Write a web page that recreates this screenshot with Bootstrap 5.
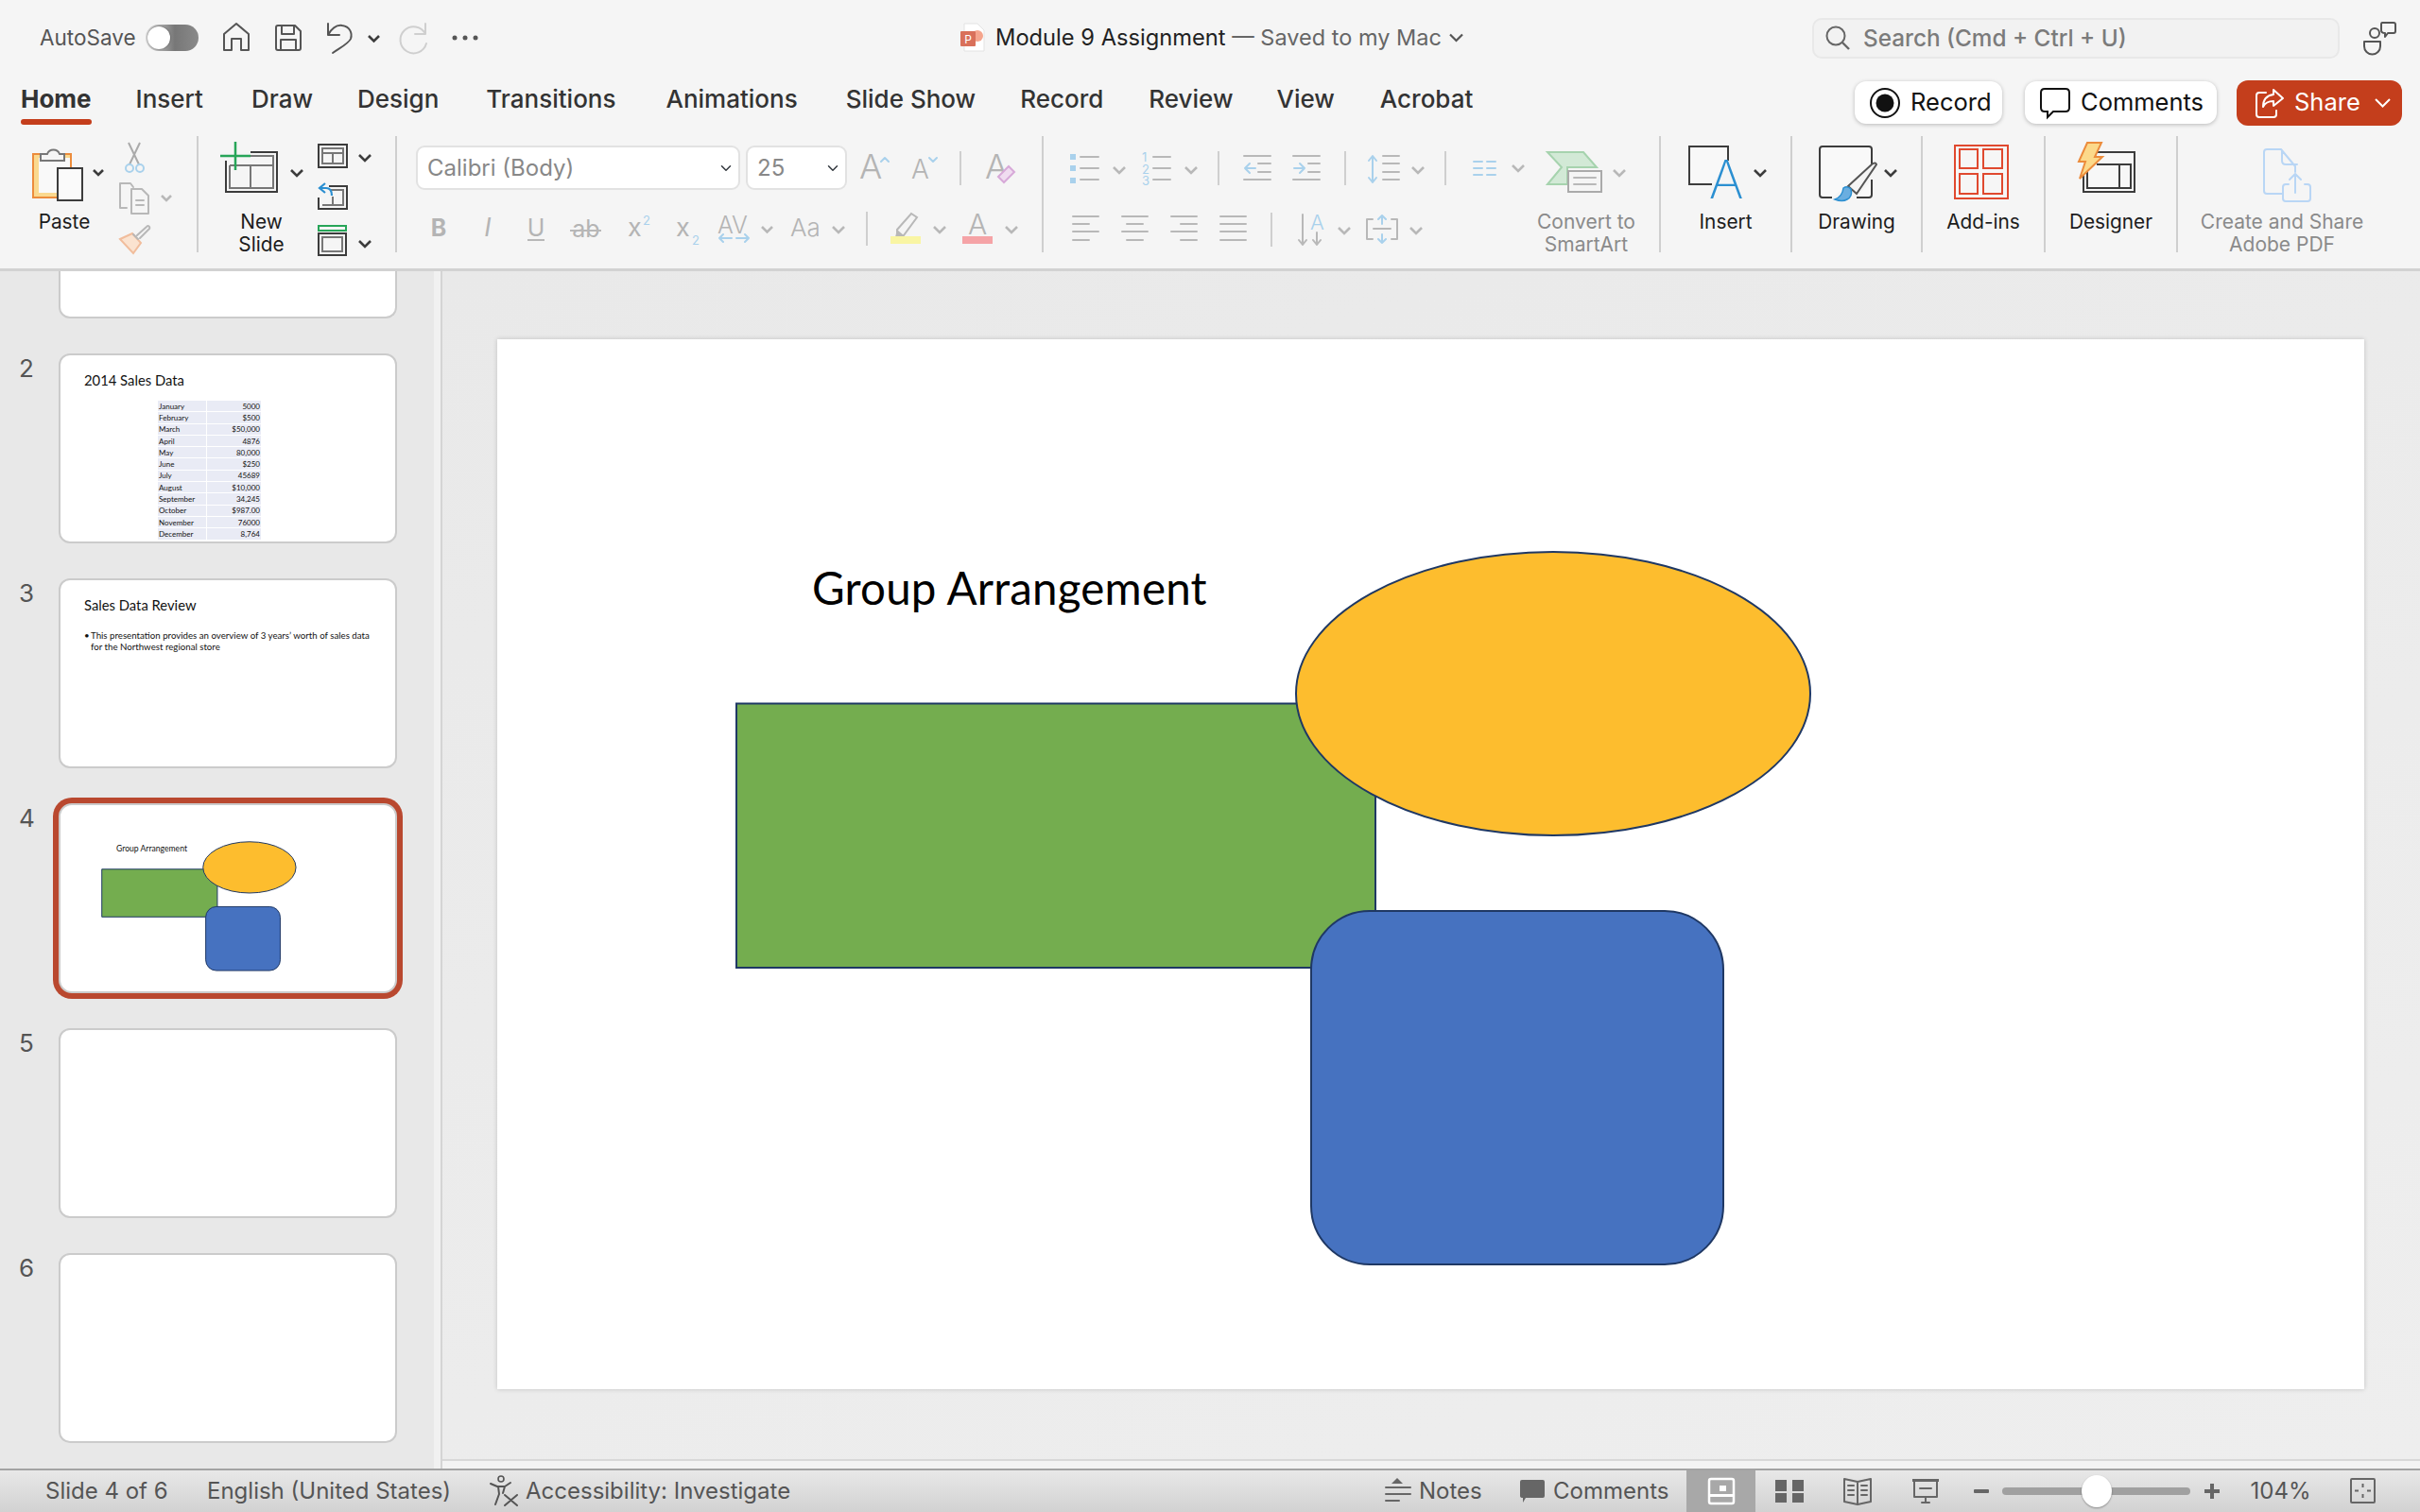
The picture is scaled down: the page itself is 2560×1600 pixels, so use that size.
<!DOCTYPE html>
<html lang="en"><head><meta charset="utf-8"><title>Module 9 Assignment</title>
<link href="https://cdn.jsdelivr.net/npm/bootstrap@5.3.0/dist/css/bootstrap.min.css" rel="stylesheet">
<style>
html,body{height:100%;margin:0}
body{width:2560px;height:1600px;overflow:hidden;background:#f5f5f5;font-family:Inter,"Liberation Sans",sans-serif;color:#222}
svg{display:block;flex:none;overflow:visible}
.ln{fill:none;stroke-width:2;stroke-linecap:round;stroke-linejoin:round}
.k{stroke:#3c3c3c}.g{stroke:#b8b8b8}.m{stroke:#666}.b{stroke:#a9d1ec}.n{stroke:#555}
.ch{fill:none;stroke:#3c3c3c;stroke-width:2.6}.cg{fill:none;stroke:#b8b8b8;stroke-width:2.6}
.t-g{fill:#b4b4b4;font-family:Inter,sans-serif}.t-b{fill:#a9d1ec;font-family:Inter,sans-serif}
.topbar{height:80px}
.tb-left{width:1016px;padding-left:42px}
.as-label{width:112px;font-size:22.5px;color:#555}
.toggle{width:56px;height:28px;border-radius:14px;background:linear-gradient(90deg,#ddd,#777 55%,#8a8a8a);padding:2px}
.knob{width:24px;height:24px;border-radius:50%;background:#fff;box-shadow:0 0 2px rgba(0,0,0,.5)}
.tb-title{width:901px;font-size:23.7px}
.tb-title .saved{color:#666;font-size:23.5px}
.search{width:558px;height:43px;background:#f2f2f2;border:2px solid #e8e8e8;border-radius:10px;color:#7b7b7b;font-size:24.3px;font-weight:500;padding-left:12px;gap:14px}
.tabsrow{height:64px;padding-left:22px;padding-right:19px}
.tab-act{padding-bottom:7px}
.nav-tabs-ppt .nav-link{padding:0 0 14px;color:#333;font-size:26px;font-weight:500;margin-right:50px;position:relative;line-height:50px}
.nav-tabs-ppt .nav-link.active{font-weight:700;color:#333;margin-right:47px}
.nav-tabs-ppt .nav-link.active::after{content:"";position:absolute;left:0;right:0;top:46px;height:6px;border-radius:3px;background:#c43e1c}
.nav-tabs-ppt .nav-item:nth-child(2) .nav-link{margin-right:51px}
.nav-tabs-ppt .nav-item:nth-child(3) .nav-link{margin-right:47px}
.nav-tabs-ppt .nav-item:nth-child(5) .nav-link{margin-right:53px}
.nav-tabs-ppt .nav-item:nth-child(6) .nav-link{margin-right:51px}
.nav-tabs-ppt .nav-item:nth-child(7) .nav-link{margin-right:47px}
.nav-tabs-ppt .nav-item:nth-child(8) .nav-link{margin-right:48px}
.nav-tabs-ppt .nav-item:nth-child(9) .nav-link{margin-right:46px}
.nav-tabs-ppt .nav-item:nth-child(10) .nav-link{margin-right:48px}
.btn-ppt{height:45px;background:#fff;border:0;border-radius:12px;box-shadow:0 1px 4px rgba(0,0,0,.25);font-size:25.5px;color:#111;padding:0;display:flex;align-items:center}
.btn-rec{width:156px;margin-right:24px;padding-left:16px;gap:11px}
.btn-com{width:203px;margin-right:21px;padding-left:16px;gap:11px}
.btn-share{width:175px;height:48px;background:#c43e1c;color:#fff;padding-left:20px;gap:11px;box-shadow:none}
.btn-share:hover{background:#c43e1c;color:#fff}
.ribbon{height:143px;border-bottom:3px solid #d2d2d2}
.rg{height:123px;border-right:2px solid #cfcfcf;flex:none}
.g1{width:210px;padding-left:34px}.g2{width:210px}.g3{width:684px}.g4{width:653px}.g5{width:139px}.g6{width:138px}.g7{width:130px}.g8{width:140px}
.g9{width:220px}
.lab{font-size:20.8px;line-height:24px;color:#1c1c1c;text-align:center;margin-top:-1px}
.dim{color:#8a8a8a;font-size:21px}
.lab-paste{width:80px;padding-right:12px}
.lab-new{padding-left:13px;width:120px}
.lab-smart{padding-right:17px;width:137px}
.col-stack{width:72px}.col-stack2{width:70px}
.row1{height:67px}.row2{height:64px}
.pad-font{padding-left:20px}
.pad-fontb{padding-left:18px;margin-top:-1px}
.font-sel{width:343px;height:47px;font-size:24px;color:#888;border:2px solid #e2e2e2;border-radius:9px;padding:0 0 0 10px;background-size:16px 12px;background-position:right 5px center;flex:none}
.size-sel{width:107px;margin-left:6px}
.vsep{width:2px;height:36px;background:#cfcfcf;flex:none}
.mx-a{margin:0 11px}.mx-b{margin:0 14px}.mx-c{margin:0 12px}
.col-para{width:514px}
.app-main{height:1267px}
.side{width:459px;background:#e8e8e8;overflow:hidden;flex:none}
.side-strip{width:9px;background:#f1f1f1;border-right:2px solid #d4d4d4;flex:none}
.sl-row{margin-bottom:37px}
.sl-num{width:62px;padding-left:20px;font-size:26px;line-height:32px;color:#555;flex:none}
.thumb{width:358px;height:201px;background:#fff;border:2px solid #cbcbcb;border-radius:12px;position:relative;overflow:hidden;flex:none;color:#111;font-family:Lato,sans-serif}
.thumb-cut{height:50px;border-top:0;border-radius:0 0 12px 12px}
.sel-wrap{box-shadow:0 0 0 6px #b9482f;border-radius:14px}
.thumb svg{position:absolute;left:-2px;top:-2px}
.th-t{position:absolute;left:25px;top:17px;font-size:14.8px;line-height:18px;white-space:nowrap}
.th-grp{left:59px;top:40px;font-size:8.6px;line-height:12px}
.th-tbl{position:absolute;left:102px;top:47px;width:111px;border-collapse:collapse;font-size:8px;line-height:10px;table-layout:fixed;margin:0}
.th-tbl td{background:#e9ebf5;border:1px solid #fff;padding:0 1px;height:12.3px}
.th-tbl td:first-child{width:52px}
.th-tbl td:last-child{text-align:right}
.th-body{position:absolute;left:25px;top:53px;width:304px;font-size:9.7px;line-height:11.5px;padding-left:7px;margin:0;list-style:none}
.th-body::before{content:"\2022";position:absolute;left:0}
.canvas-col{min-width:0}
.canvas{background:linear-gradient(160deg,#e9e9e9,#eeeeee);padding:72px 0 0 58px}
.h-strip{height:10px;background:#f3f3f3;border-top:2px solid #d8d8d8;flex:none}
.slide{width:1975px;height:1111px;background:#fff;position:relative;box-shadow:0 0 5px rgba(0,0,0,.18)}
.slide svg{position:absolute;left:0;top:0}
.shp{vector-effect:non-scaling-stroke}
.shp-main{stroke-width:2}.shp-th{stroke-width:1}
.sl-title{position:absolute;left:333px;top:232px;font-family:Lato,sans-serif;font-size:47.5px;letter-spacing:.2px;line-height:62px;color:#000;white-space:nowrap}
.status{height:46px;border-top:2px solid #a3a3a3;background:linear-gradient(#e8e8e8,#d2d2d2);font-size:24px;color:#555;padding-left:48px}
.st1{width:171px}.st2{width:299px}.st3{margin-left:8px}
.st-n{width:102px;padding-left:3px}.st-c{width:144px;padding-left:3px}
.st-act{width:73px;height:44px;background:#a8a8a8}
.st-z{width:115px;text-align:center}
.slider{width:199px;height:8px;border-radius:4px;background:#a0a0a0;position:relative;margin:0 8px 0 0;flex:none}
.slider i{position:absolute;left:84px;top:-13px;width:32px;height:34px;border-radius:50%;background:#fff;box-shadow:0 1px 2px rgba(0,0,0,.35)}
</style></head><body>
<svg width="0" height="0" class="position-absolute"><defs>
<symbol id="shapes" viewBox="0 0 1975 1111"><g stroke="#1f3864">
<rect class="shp" x="253" y="385.5" width="676" height="279.5" fill="#74ad4f"/>
<ellipse class="shp" cx="1117" cy="375" rx="272" ry="150" fill="#fdbd2e"/>
<rect class="shp" x="861" y="605" width="436" height="374" rx="62" fill="#4672c0"/></g></symbol>
</defs></svg>

<div class="d-flex flex-column h-100">
<div class="topbar d-flex align-items-center">
 <div class="tb-left d-flex align-items-center">
  <span class="as-label">AutoSave</span>
  <div class="toggle"><div class="knob"></div></div>
  <svg width="66" height="80" viewBox="210 0 66 80"><path class="ln n" d="M237 36 250 25 263 36V53H255V41H245V53H237Z"/></svg>
  <svg width="56" height="80" viewBox="276 0 56 80"><path class="ln n" d="M292 29q0-2 2-2h18l6 6v18q0 2-2 2h-22q-2 0-2-2Z M298 27v9h13v-9 M297 53V42h16v11"/></svg>
  <svg width="78" height="80" viewBox="332 0 78 80"><path class="ln n" d="M347 25v12h12 M347 37c4-7 9-11 15-10 8 1 11 8 9 14-2 5-12 10-19 15"/><path class="ch" d="M390 38l5.500 5.500 5.500-5.500"/></svg>
  <svg width="56" height="80" viewBox="410 0 56 80"><path class="ln" stroke="#cfcfcf" d="M450 25v11h-11 M450 36a14 14 0 1 0 1 10"/></svg>
  <svg width="54" height="80" viewBox="466 0 54 80"><circle cx="481" cy="40" r="2.500" fill="#555"/><circle cx="492" cy="40" r="2.500" fill="#555"/><circle cx="503" cy="40" r="2.500" fill="#555"/></svg>
 </div>
 <div class="tb-title d-flex align-items-center">
  <svg width="37" height="80" viewBox="1016 0 37 80"><path d="M1020 25h14l7 7v22h-21Z" fill="#fff" stroke="#e3e3e3"/><circle cx="1034" cy="38" r="6" fill="#f5a58d"/><rect x="1016" y="33" width="16" height="16" rx="1" fill="#d9705a"/><text x="1024" y="46" font-size="12" fill="#fff" text-anchor="middle" font-family="Inter">P</text></svg>
  <span class="text-nowrap">Module 9 Assignment <span class="saved">— Saved to my Mac</span></span>
  <svg width="15" height="10" viewBox="0 0 15 10" class="ms-2"><path d="M1 1.500l6.500 6.500 6.500-6.500" fill="none" stroke="#555" stroke-width="2.200"/></svg>
 </div>
 <div class="search d-flex align-items-center">
  <svg width="26" height="26" viewBox="0 0 26 26"><circle cx="11" cy="11" r="9.500" fill="none" stroke="#666" stroke-width="2"/><path d="M18 18l7 7" stroke="#666" stroke-width="2.400"/></svg>
  <span>Search (Cmd + Ctrl + U)</span>
 </div>
 <svg class="ms-4" width="36" height="36" viewBox="0 0 36 36"><circle cx="13" cy="13" r="5" fill="none" stroke="#555" stroke-width="2"/><path class="ln n" d="M2 22h17v5a8.500 8.500 0 0 1-17 0Z M21 2h12q2 0 2 2v7q0 2-2 2h-6l-3 4v-4q-4 0-4-3V4q0-2 1-2Z"/></svg>
</div>
<div class="tabsrow d-flex align-items-center">
 <ul class="nav nav-tabs-ppt flex-nowrap">
  <li class="nav-item"><a class="nav-link active" href="#">Home</a></li>
  <li class="nav-item"><a class="nav-link" href="#">Insert</a></li>
  <li class="nav-item"><a class="nav-link" href="#">Draw</a></li>
  <li class="nav-item"><a class="nav-link" href="#">Design</a></li>
  <li class="nav-item"><a class="nav-link" href="#">Transitions</a></li>
  <li class="nav-item"><a class="nav-link" href="#">Animations</a></li>
  <li class="nav-item"><a class="nav-link" href="#">Slide Show</a></li>
  <li class="nav-item"><a class="nav-link" href="#">Record</a></li>
  <li class="nav-item"><a class="nav-link" href="#">Review</a></li>
  <li class="nav-item"><a class="nav-link" href="#">View</a></li>
  <li class="nav-item"><a class="nav-link" href="#">Acrobat</a></li>
 </ul>
 <div class="ms-auto d-flex align-items-center tab-act">
  <button class="btn btn-ppt btn-rec"><svg width="32" height="32" viewBox="0 0 32 32"><circle cx="16" cy="16" r="15" fill="none" stroke="#111" stroke-width="2"/><circle cx="16" cy="16" r="9.500" fill="#111"/></svg>Record</button>
  <button class="btn btn-ppt btn-com"><svg width="32" height="32" viewBox="0 0 32 32"><path d="M5 1h22q4 0 4 4v16q0 4-4 4H14l-6 6v-6H5q-4 0-4-4V5q0-4 4-4Z" fill="none" stroke="#111" stroke-width="2"/></svg>Comments</button>
  <button class="btn btn-ppt btn-share"><svg width="30" height="32" viewBox="0 0 30 32"><path class="ln" stroke="#fff" d="M22 24v4q0 3-3 3H4q-3 0-3-3V8q0-3 3-3h7 M19 2l10 9-10 8v-5c-6 0-9 2-11 6 0-8 4-12 11-13Z"/></svg>Share<svg class="ms-1" width="17" height="10" viewBox="0 0 17 10"><path d="M1 1l7.500 7.500L16 1" fill="none" stroke="#fff" stroke-width="2"/></svg></button>
 </div>
</div>
<div class="ribbon d-flex align-items-start">
 <div class="rg g1 d-flex">
  <div>
   <svg width="80" height="80" viewBox="34 144 80 80">
    <rect x="35" y="163" width="40" height="46" fill="#fad98f" stroke="#ec8c3c" stroke-width="2"/><rect x="41" y="167" width="33" height="37" fill="#f9f9f9"/>
    <path d="M43 170v-7h7a7 7 0 0 1 13 0h5v7Z" fill="#f5f5f5" stroke="#777" stroke-width="2"/>
    <rect x="61" y="178" width="26" height="34" fill="#fafafa" stroke="#3c3c3c" stroke-width="2"/>
    <path class="ch" d="M99 180l5 5 5-5"/></svg>
   <div class="lab lab-paste">Paste</div>
  </div>
  <div class="col-stack">
   <svg width="72" height="44" viewBox="114 144 72 44"><path d="M136 151l11 23M148 151l-11 23" stroke="#aaa" stroke-width="2" fill="none"/><circle cx="137" cy="178" r="4" fill="none" stroke="#a9d1ec" stroke-width="2"/><circle cx="148" cy="178" r="4" fill="none" stroke="#a9d1ec" stroke-width="2"/></svg>
   <svg width="72" height="44" viewBox="114 188 72 44"><path class="ln g" d="M134 220h-7v-26h11l3 4 M139 200h11l7 7v19h-18Z M144 212h8M144 217h8"/><path class="cg" d="M171 207l5 5 5-5"/></svg>
   <svg width="72" height="44" viewBox="114 232 72 44"><path d="M127 253l13-6 9 10-8 11Z" fill="#fbe3d0" stroke="#f1bd9c" stroke-width="2"/><path class="ln g" d="M141 248l5 5M145 249l10-9q2-2 3 0t-1 3l-9 9"/></svg>
  </div>
 </div>
 <div class="rg g2 d-flex">
  <div>
   <svg width="120" height="80" viewBox="210 144 120 80">
    <path d="M265 161h28v42h-54v-33" fill="none" stroke="#3c3c3c" stroke-width="2"/><path d="M265 165h24v34h-46v-24M243 175h46M265 175v24" fill="none" stroke="#777" stroke-width="2"/>
    <path d="M249 150v30M233 165h32" stroke="#27a558" stroke-width="2.500"/>
    <path class="ch" d="M308 180l6 6 6-6"/></svg>
   <div class="lab lab-new">New<br>Slide</div>
  </div>
  <div class="col-stack2">
   <svg width="70" height="44" viewBox="330 144 70 44"><rect x="337" y="153" width="30" height="24" fill="none" stroke="#3c3c3c" stroke-width="2"/><path d="M341 157h22v16h-22ZM341 162h22M352 162v11" fill="none" stroke="#777" stroke-width="2"/><path class="ch" d="M380 164l6 6 6-6"/></svg>
   <svg width="70" height="44" viewBox="330 188 70 44"><path d="M348 197h19v24h-30v-12" fill="#f5f5f5" stroke="#3c3c3c" stroke-width="2"/><path d="M341 217h22v-16h-13M352 208v9" fill="none" stroke="#777" stroke-width="2"/><path d="M344 194l-6 5 6 5M339 199h6q6 0 6 8" fill="none" stroke="#2b8fd1" stroke-width="2.200"/></svg>
   <svg width="70" height="44" viewBox="330 232 70 44"><rect x="337" y="239" width="29" height="5" fill="none" stroke="#27a558" stroke-width="2"/><rect x="337" y="247" width="29" height="23" fill="none" stroke="#3c3c3c" stroke-width="2"/><rect x="341" y="251" width="21" height="15" fill="none" stroke="#777" stroke-width="2"/><path class="ch" d="M380 255l6 6 6-6"/></svg>
  </div>
 </div>
 <div class="rg g3">
  <div class="row1 d-flex align-items-center pad-font">
   <select class="form-select font-sel" aria-label="Font"><option>Calibri (Body)</option></select>
   <select class="form-select font-sel size-sel" aria-label="Size"><option>25</option></select>
   <svg width="54" height="66" viewBox="896 144 54 66"><text class="t-g" x="909" y="188" font-size="36" font-weight="300">A</text><path class="ln b" d="M932 170l4-4 4 4"/></svg>
   <svg width="54" height="66" viewBox="950 144 54 66"><text class="t-g" x="964" y="188" font-size="28" font-weight="300">A</text><path class="ln b" d="M983 166l4 4 4-4"/></svg>
   <i class="vsep mx-a"></i>
   <svg width="60" height="66" viewBox="1028 144 60 66"><text class="t-g" x="1042" y="188" font-size="36" font-weight="300">A</text><path d="M1056 186l11-11 6 6-11 11Z" fill="#f0dcf0" stroke="#d7a9d8" stroke-width="2"/></svg>
  </div>
  <div class="row2 d-flex align-items-center pad-fontb">
   <svg width="52" height="64" viewBox="438 210 52 64"><text class="t-g" x="464" y="250" font-size="25" font-weight="700" text-anchor="middle">B</text></svg>
   <svg width="52" height="64" viewBox="490 210 52 64"><text class="t-g" x="516" y="250" font-size="27" font-style="italic" text-anchor="middle">I</text></svg>
   <svg width="52" height="64" viewBox="542 210 52 64"><text class="t-g" x="567" y="250" font-size="25" text-anchor="middle">U</text><path class="g" d="M558 254h18" stroke-width="2"/></svg>
   <svg width="56" height="64" viewBox="594 210 56 64"><text class="t-g" x="620" y="251" font-size="25" text-anchor="middle">ab</text><path class="g" d="M603 244h33" stroke-width="2"/></svg>
   <svg width="52" height="64" viewBox="650 210 52 64"><text class="t-g" x="664" y="250" font-size="27">x</text><text class="t-b" x="680" y="238" font-size="13">2</text></svg>
   <svg width="52" height="64" viewBox="702 210 52 64"><text class="t-g" x="715" y="250" font-size="27">x</text><text class="t-b" x="732" y="259" font-size="13">2</text></svg>
   <svg width="68" height="64" viewBox="754 210 68 64"><text class="t-g" x="759" y="247" font-size="25" font-weight="300">AV</text><path class="ln b" d="M761 252h13M765 248l-4 4 4 4M779 252h13M788 248l4 4-4 4"/><path class="cg" d="M806 240l5.500 5.500 5.500-5.500"/></svg>
   <svg width="82" height="64" viewBox="822 210 82 64"><text class="t-g" x="836" y="250" font-size="26" font-weight="300">Aa</text><path class="cg" d="M881 240l6 6 6-6"/></svg>
   <i class="vsep mx-c"></i>
   <svg width="76" height="64" viewBox="930 210 76 64"><path d="M949 243l15-17 6 4-14 19-7 1Z" fill="#f5f5f5" stroke="#b8b8b8" stroke-width="2"/><path d="M949 243l7 6-9 2Z" fill="#b8b8b8"/><rect x="942" y="250" width="32" height="8" fill="#f9f5a3"/><path class="cg" d="M988 240l6 6 6-6"/></svg>
   <svg width="76" height="64" viewBox="1006 210 76 64"><text class="t-g" x="1024" y="248" font-size="30" font-weight="300">A</text><rect x="1018" y="250" width="32" height="8" fill="#f5a3a6"/><path class="cg" d="M1064 240l6 6 6-6"/></svg>
  </div>
 </div>
 <div class="rg g4 d-flex">
  <div class="col-para">
   <div class="row1 d-flex align-items-center">
    <svg width="92" height="66" viewBox="1104 144 92 66"><path d="M1132 162h6v6h-6ZM1132 174h6v6h-6ZM1132 187h6v6h-6Z" fill="#a9d1ec"/><path class="ln g" d="M1143 165h19M1143 177h19M1143 189h19"/><path class="cg" d="M1178 176l6 6 6-6"/></svg>
    <svg width="78" height="66" viewBox="1196 144 78 66"><text class="t-b" x="1208" y="170" font-size="13">1</text><text class="t-b" x="1208" y="183" font-size="13">2</text><text class="t-b" x="1208" y="195" font-size="13">3</text><path class="ln g" d="M1220 165h18M1220 177h18M1220 189h18"/><path class="cg" d="M1254 176l6 6 6-6"/></svg>
    <i class="vsep mx-b"></i>
    <svg width="52" height="66" viewBox="1304 144 52 66"><path class="ln g" d="M1316 164h28M1331 172h13M1331 181h13M1316 189h28"/><path class="ln b" d="M1328 177h-11M1322 172l-5 5 5 5"/></svg>
    <svg width="52" height="66" viewBox="1356 144 52 66"><path class="ln g" d="M1368 164h28M1384 172h12M1384 181h12M1368 189h28"/><path class="ln b" d="M1369 177h11M1375 172l5 5-5 5"/></svg>
    <i class="vsep mx-b"></i>
    <svg width="76" height="66" viewBox="1438 144 76 66"><path class="ln b" d="M1452 165v27M1448 169l4-5 4 5M1448 187l4 5 4-5"/><path class="ln g" d="M1463 164h17M1463 172h17M1463 181h17M1463 189h17"/><path class="cg" d="M1494 176l6 6 6-6"/></svg>
    <i class="vsep mx-b"></i>
    <svg width="74" height="66" viewBox="1544 144 74 66"><path class="ln b" d="M1559 170h9M1559 177h9M1559 184h9M1573 170h9M1573 177h9M1573 184h9"/><path class="cg" d="M1600 174l6 6 6-6"/></svg>
   </div>
   <div class="row2 d-flex align-items-center">
    <svg width="70" height="64" viewBox="1104 210 70 64"><path class="ln g" d="M1135 228h27M1135 236h17M1135 244h27M1135 253h17"/></svg>
    <svg width="52" height="64" viewBox="1174 210 52 64"><path class="ln g" d="M1187 228h27M1192 236h17M1187 244h27M1192 253h17"/></svg>
    <svg width="52" height="64" viewBox="1226 210 52 64"><path class="ln g" d="M1239 228h27M1249 236h17M1239 244h27M1249 253h17"/></svg>
    <svg width="52" height="64" viewBox="1278 210 52 64"><path class="ln g" d="M1291 228h27M1291 236h27M1291 244h27M1291 253h27"/></svg>
    <i class="vsep mx-b"></i>
    <svg width="76" height="64" viewBox="1360 210 76 64"><path class="ln g" d="M1378 226v32M1374 253l4 5 4-5M1393 245v13M1389 253l4 5 4-5"/><text class="t-b" x="1386" y="242" font-size="22" font-weight="300">A</text><path class="cg" d="M1416 240l6 6 6-6"/></svg>
    <svg width="76" height="64" viewBox="1436 210 76 64"><path class="ln g" d="M1452 231h-6v21h6M1472 231h6v21h-6M1453 241h18"/><path class="ln b" d="M1462 227v9M1458 231l4-4 4 4M1462 247v9M1458 252l4 4 4-4"/><path class="cg" d="M1492 240l6 6 6-6"/></svg>
   </div>
  </div>
  <div>
   <svg width="137" height="80" viewBox="1618 144 137 80"><path d="M1637 161h38l14 16h-31v18h-21l15-18Z" fill="#d2e9d6" stroke="#a6d3ae" stroke-width="2"/><rect x="1659" y="181" width="35" height="22" fill="#f5f5f5" stroke="#aaa" stroke-width="2"/><path class="ln g" d="M1665 188h23M1665 195h23"/><path class="cg" d="M1707 180l6 6 6-6"/></svg>
   <div class="lab dim lab-smart">Convert to<br>SmartArt</div>
  </div>
 </div>
 <div class="rg g5">
  <svg width="137" height="80" viewBox="1757 144 137 80"><path d="M1828 170v-15h-41v40h24" fill="#f8f8f8" stroke="#3c3c3c" stroke-width="2"/><text x="1826" y="210" font-size="56" font-weight="200" fill="#2b8fd1" text-anchor="middle" font-family="Inter">A</text><path class="ch" d="M1856 180l6 6 6-6"/></svg>
  <div class="lab">Insert</div>
 </div>
 <div class="rg g6">
  <svg width="136" height="80" viewBox="1896 144 136 80"><path d="M1938 209h-10q-3 0-3-3v-48q0-3 3-3h49q3 0 3 3v18M1980 190v16q0 3-3 3h-13" fill="#f9f9f9" stroke="#3c3c3c" stroke-width="2"/><path d="M1955 197l25-23q4-3 5 0l-21 31Z" fill="#f5f5f5" stroke="#555" stroke-width="2"/><path d="M1941 211q8 3 13 0 6-3 4-11-4-4-8-1-1 9-9 12Z" fill="#6aaee0" stroke="#2b8fd1" stroke-width="1.500"/><path class="ch" d="M1994 180l6 6 6-6"/></svg>
  <div class="lab">Drawing</div>
 </div>
 <div class="rg g7">
  <svg width="128" height="80" viewBox="2034 144 128 80"><rect x="2068" y="154" width="56" height="56" fill="#f6f6f6" stroke="#e0492f" stroke-width="2"/><path d="M2073 158h19v20h-19ZM2098 158h20v20h-20ZM2073 184h19v21h-19ZM2098 184h20v21h-20Z" fill="none" stroke="#e0492f" stroke-width="2"/></svg>
  <div class="lab">Add-ins</div>
 </div>
 <div class="rg g8">
  <svg width="138" height="80" viewBox="2164 144 138 80"><path d="M2216 161h42v42h-54v-26" fill="#f7f7f7" stroke="#3c3c3c" stroke-width="2"/><path d="M2218 174h36v25h-46v-20M2242 174v25" stroke="#3c3c3c" stroke-width="2" fill="none"/><path d="M2208 151h15l-7 15h8l-24 23 6-18h-7Z" fill="#fcd98a" stroke="#ec8c3c" stroke-width="2"/></svg>
  <div class="lab">Designer</div>
 </div>
 <div class="g9">
  <svg width="220" height="80" viewBox="2304 144 220 80"><path class="ln" stroke="#b9d6f5" d="M2414 205h-16q-3 0-3-3v-41q0-3 3-3h15l15 18v6 M2414 160v10q0 4 4 4h12 M2421 195h-3q-3 0-3 3v12q0 3 3 3h23q3 0 3-3v-12q0-3-3-3h-3 M2428 204v-20M2422 190l6-6 6 6"/></svg>
  <div class="lab dim">Create and Share<br>Adobe PDF</div>
 </div>
</div>
<div class="app-main d-flex">
 <aside class="side">
  <div class="sl-row d-flex"><div class="sl-num"></div><div class="thumb thumb-cut"></div></div>
  <div class="sl-row d-flex"><div class="sl-num">2</div><div class="thumb">
    <div class="th-t">2014 Sales Data</div>
    <table class="th-tbl"><tbody>
     <tr><td>January</td><td>5000</td></tr><tr><td>February</td><td>$500</td></tr><tr><td>March</td><td>$50,000</td></tr><tr><td>April</td><td>4876</td></tr><tr><td>May</td><td>80,000</td></tr><tr><td>June</td><td>$250</td></tr><tr><td>July</td><td>45689</td></tr><tr><td>August</td><td>$10,000</td></tr><tr><td>September</td><td>34,245</td></tr><tr><td>October</td><td>$987.00</td></tr><tr><td>November</td><td>76000</td></tr><tr><td>December</td><td>8,764</td></tr>
    </tbody></table></div></div>
  <div class="sl-row d-flex"><div class="sl-num">3</div><div class="thumb">
    <div class="th-t">Sales Data Review</div>
    <p class="th-body">This presentation provides an overview of 3 years’ worth of sales data for the Northwest regional store</p></div></div>
  <div class="sl-row d-flex"><div class="sl-num">4</div><div class="thumb sel-wrap">
    <svg class="shp-th" width="357" height="201"><use href="#shapes" width="357" height="201"/></svg>
    <div class="th-t th-grp">Group Arrangement</div></div></div>
  <div class="sl-row d-flex"><div class="sl-num">5</div><div class="thumb"></div></div>
  <div class="sl-row d-flex"><div class="sl-num">6</div><div class="thumb"></div></div>
 </aside>
 <div class="side-strip"></div>
 <main class="canvas-col flex-grow-1 d-flex flex-column">
  <div class="canvas flex-grow-1">
   <div class="slide">
    <svg class="shp-main" width="1975" height="1111"><use href="#shapes" width="1975" height="1111"/></svg>
    <div class="sl-title">Group Arrangement</div>
   </div>
  </div>
  <div class="h-strip"></div>
 </main>
</div>
<footer class="status d-flex align-items-center">
 <span class="st1">Slide 4 of 6</span>
 <span class="st2">English (United States)</span>
 <svg width="30" height="32" viewBox="518 1562 30 32"><circle cx="530" cy="1565" r="3" fill="none" stroke="#555" stroke-width="1.600"/><path class="ln n" d="M519 1570l7 3 8 0 6-4M527 1573l1 8-4 11M534 1573l-2 7M534 1582l13 11M547 1582l-13 11"/></svg>
 <span class="st3">Accessibility: Investigate</span>
 <div class="ms-auto d-flex align-items-center">
  <svg width="38" height="44" viewBox="1460 1556 38 44"><path d="M1472 1570l6-6 6 6Z" fill="#666"/><path class="ln m" d="M1466 1574h26M1466 1581h26M1466 1588h14"/></svg>
  <span class="st-n">Notes</span>
  <svg width="40" height="44" viewBox="1600 1556 40 44"><path d="M1610 1566h22q2 0 2 2v15q0 2-2 2h-18l-3 5v-5q-3 0-3-2v-15q0-2 2-2Z" fill="#666"/></svg>
  <span class="st-c">Comments</span>
  <div class="st-act"><svg width="73" height="44" viewBox="1784 1556 73 44"><rect x="1808" y="1565" width="26" height="26" rx="2" fill="none" stroke="#fff" stroke-width="2.500"/><path d="M1819 1572h7v6h-7ZM1808 1581h26v3h-26Z" fill="#fff"/></svg></div>
  <svg width="73" height="44" viewBox="1857 1556 73 44"><path d="M1878 1566h12v12h-12ZM1896 1566h12v12h-12ZM1878 1580h12v10h-12ZM1896 1580h12v10h-12Z" fill="#666"/></svg>
  <svg width="72" height="44" viewBox="1930 1556 72 44"><path class="ln m" d="M1965 1568l14-3v24l-14 3-14-3v-24ZM1965 1568v24M1955 1572h6M1955 1577h6M1955 1582h6M1969 1572h6M1969 1577h6M1969 1582h6"/></svg>
  <svg width="68" height="44" viewBox="2002 1556 68 44"><path d="M2023 1565h28v3h-28Z" fill="#666"/><path class="ln m" d="M2025 1568v16h24v-16M2037 1584v6M2033 1590h8M2031 1575h12"/></svg>
  <svg width="48" height="44" viewBox="2070 1556 48 44"><rect x="2088" y="1576" width="16" height="4" rx="1" fill="#666"/></svg>
  <div class="slider"><i></i></div>
  <svg width="30" height="44" viewBox="2325 1556 30 44"><path d="M2340 1570v16M2332 1578h16" stroke="#666" stroke-width="4"/></svg>
  <span class="st-z">104%</span>
  <svg width="90" height="44" viewBox="2470 1556 90 44"><rect x="2487" y="1565" width="25" height="25" rx="1" fill="none" stroke="#666" stroke-width="2"/><path d="M2499.500 1570v4M2499.500 1581v4M2491 1577.500h4M2504 1577.500h4" stroke="#666" stroke-width="2"/></svg>
 </div>
</footer>
</div>
<script src="https://cdn.jsdelivr.net/npm/bootstrap@5.3.0/dist/js/bootstrap.bundle.min.js"></script>
</body></html>
